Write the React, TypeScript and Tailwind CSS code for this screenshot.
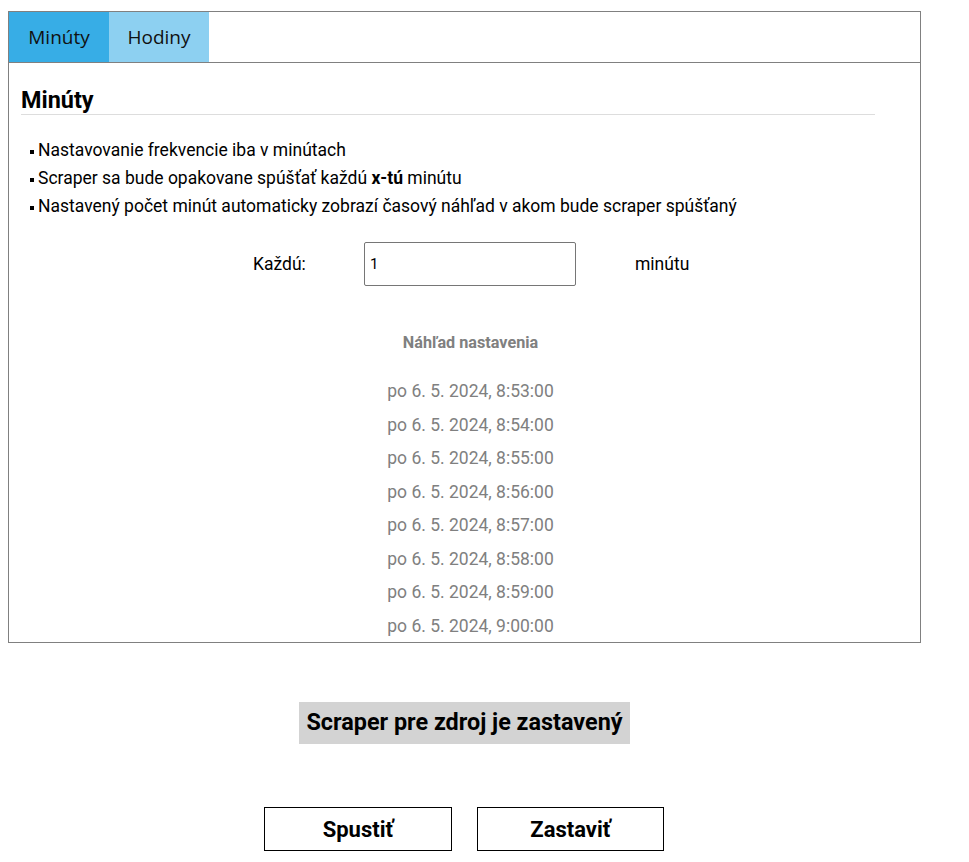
const previews = [
  "po 6. 5. 2024, 8:53:00",
  "po 6. 5. 2024, 8:54:00",
  "po 6. 5. 2024, 8:55:00",
  "po 6. 5. 2024, 8:56:00",
  "po 6. 5. 2024, 8:57:00",
  "po 6. 5. 2024, 8:58:00",
  "po 6. 5. 2024, 8:59:00",
  "po 6. 5. 2024, 9:00:00",
];

export default function App() {
  return (
    <div className="w-[969px] h-[862px] bg-white font-['Roboto',sans-serif] text-black">
      <div className="pt-[11px] pl-2 w-[921px]">
        {/* Panel */}
        <div className="border border-[#808080]">
          <div className="flex h-[51px] border-b border-[#808080]">
            <div className="w-[100px] h-[50px] bg-[#37ade6] flex items-center justify-center font-['Open_Sans',sans-serif] text-[19px] text-[#111]">
              Minúty
            </div>
            <div className="w-[100px] h-[50px] bg-[#8dd0f1] flex items-center justify-center font-['Open_Sans',sans-serif] text-[19px] text-[#111]">
              Hodiny
            </div>
          </div>

          <div className="h-[579px] overflow-hidden px-3">
            <h2 className="mt-[23px] text-[23.4px] font-bold leading-[28px] border-b border-[#dddddd] w-[854px]">
              Minúty
            </h2>

            <ul className="mt-[21px] pl-[9px] text-[17.5px] leading-[28px]">
              <li className="flex items-center">
                <span className="w-[4px] h-[4px] mt-[4px] bg-black mr-[4px]"></span>
                Nastavovanie frekvencie iba v minútach
              </li>
              <li className="flex items-center">
                <span className="w-[4px] h-[4px] mt-[4px] bg-black mr-[4px]"></span>
                <span>
                  Scraper sa bude opakovane spúšťať každú <b>x-tú</b> minútu
                </span>
              </li>
              <li className="flex items-center">
                <span className="w-[4px] h-[4px] mt-[4px] bg-black mr-[4px]"></span>
                Nastavený počet minút automaticky zobrazí časový náhľad v akom bude scraper spúšťaný
              </li>
            </ul>

            {/* Input row */}
            <div className="mt-[22px] flex items-center text-[17.5px]">
              <span className="ml-[232px] w-[111px]">Každú:</span>
              <input
                type="text"
                defaultValue="1"
                className="w-[212px] h-[44px] border border-[#767676] rounded-[2px] px-[5px] text-[15px] outline-none"
              />
              <span className="ml-[59px]">minútu</span>
            </div>

            {/* Preview */}
            <div className="mt-[47px] flex flex-col items-center w-[899px] text-[#808080]">
              <div className="text-[16.2px] font-bold leading-[20px]">Náhľad nastavenia</div>
              <div className="mt-[22px] flex flex-col items-center">
                {previews.map((p) => (
                  <div key={p} className="text-[17.5px] leading-[33.5px]">
                    {p}
                  </div>
                ))}
              </div>
            </div>
          </div>
        </div>

        {/* Status */}
        <div className="mt-[59px] flex justify-center">
          <div className="bg-[#d3d3d3] h-[42px] px-[7px] flex items-center text-[23.4px] font-bold">
            Scraper pre zdroj je zastavený
          </div>
        </div>

        {/* Buttons */}
        <div className="mt-[63px] w-[912px] flex justify-center gap-[25px]">
          <button className="w-[188px] h-[44px] border border-black bg-white text-[22px] font-bold">
            Spustiť
          </button>
          <button className="w-[187px] h-[44px] border border-black bg-white text-[22px] font-bold">
            Zastaviť
          </button>
        </div>
      </div>
    </div>
  );
}
